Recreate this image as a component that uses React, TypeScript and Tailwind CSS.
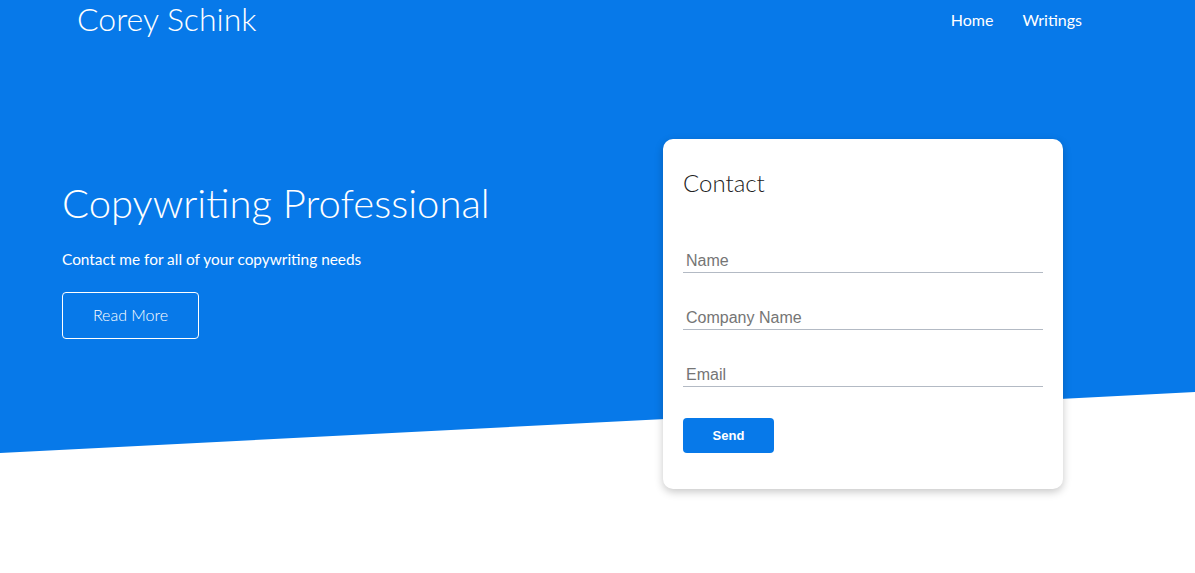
import React from "react";

export default function App() {
  return (
    <div className="relative min-h-[573px] w-full overflow-hidden bg-white font-['Lato','Noto_Sans',sans-serif]">
      <div
        className="absolute inset-x-0 top-0 h-[453px] bg-[#0779e9] [clip-path:polygon(0_0,100%_0,100%_392px,0_100%)]"
        aria-hidden="true"
      />
      <header className="relative flex items-start justify-between">
        <div className="pl-[77px] text-[32px] font-light leading-[1.2] text-white">Corey Schink</div>
        <nav className="mt-[10px] flex gap-[29px] pr-[113px] text-[16px] leading-[1.2] text-white">
          <a href="#">Home</a>
          <a href="#">Writings</a>
        </nav>
      </header>
      <main className="relative mt-[101px] flex items-start pl-[62px]">
        <div className="w-[601px] shrink-0 pt-[39.5px] text-white">
          <h1 className="text-[40px] font-light leading-[48px]">Copywriting Professional</h1>
          <p className="mt-[20px] text-[15.4px] leading-[24px]">Contact me for all of your copywriting needs</p>
          <button className="mt-[21px] flex h-[47px] w-[137px] items-center justify-center rounded-[4px] border border-white text-[16px] font-light text-white">
            Read More
          </button>
        </div>
        <div className="h-[350px] w-[400px] shrink-0 rounded-[10px] bg-white px-[20px] pt-[30px] shadow-[0_3px_8px_rgba(0,0,0,0.22)]">
          <h2 className="text-[24px] font-light leading-[1.2] text-[#222]">Contact</h2>
          <form className="mt-[52px] font-['Liberation_Sans',Arial,sans-serif]">
            <input
              placeholder="Name"
              className="block h-[23px] w-full border-b border-[#b3bac4] px-[3px] text-[16px] outline-none placeholder:text-[#757575]"
            />
            <input
              placeholder="Company Name"
              className="mt-[34px] block h-[23px] w-full border-b border-[#b3bac4] px-[3px] text-[16px] outline-none placeholder:text-[#757575]"
            />
            <input
              placeholder="Email"
              className="mt-[34px] block h-[23px] w-full border-b border-[#b3bac4] px-[3px] text-[16px] outline-none placeholder:text-[#757575]"
            />
            <button
              type="button"
              className="mt-[31px] h-[35px] w-[91px] rounded-[4px] bg-[#0779e9] text-[13px] font-bold text-white"
            >
              Send
            </button>
          </form>
        </div>
      </main>
    </div>
  );
}
